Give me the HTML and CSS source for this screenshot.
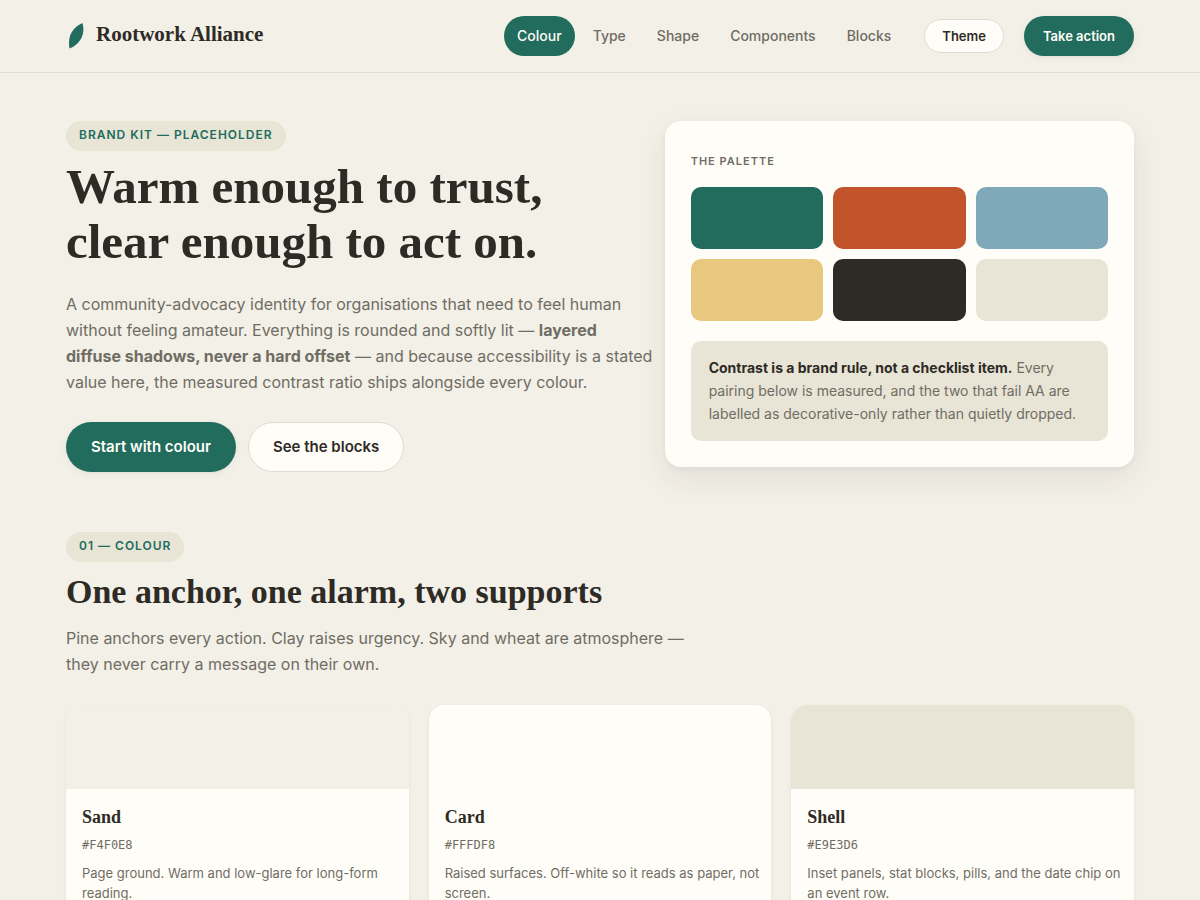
FILE: index.html
```
<!DOCTYPE html>
<html lang="en">
<head>
    <meta charset="UTF-8">
    <meta name="viewport" content="width=device-width, initial-scale=1.0">
    <title>Rootwork Alliance - Brand Kit</title>
    <link rel="stylesheet" href="styles.css">
</head>
<body>
    <header class="header">
        <a href="#top" class="logo">
            <svg class="logo-mark" width="20" height="28" viewBox="0 0 20 28" aria-hidden="true">
                <path d="M16.500 1C7.500 5 1 13 3.500 26.500C12.500 23 20 14 16.500 1Z" fill="#216c5c"/>
            </svg>
            <span>Rootwork Alliance</span>
        </a>
        <nav class="nav-links">
            <a href="#colour" class="active">Colour</a>
            <a href="#type">Type</a>
            <a href="#shape">Shape</a>
            <a href="#components">Components</a>
            <a href="#blocks">Blocks</a>
        </nav>
        <button type="button" class="btn btn-light btn-theme">Theme</button>
        <a href="#action" class="btn btn-primary btn-small">Take action</a>
    </header>

    <main class="main-content" id="top">
        <section class="hero">
            <div class="hero-text">
                <span class="pill">Brand kit — placeholder</span>
                <h1>Warm enough to trust,<br>clear enough to act on.</h1>
                <p class="lead">A community-advocacy identity for organisations that need to feel human without feeling amateur. Everything is rounded and softly lit — <strong>layered diffuse shadows, never a hard offset</strong> — and because accessibility is a stated value here, the measured contrast ratio ships alongside every colour.</p>
                <div class="hero-actions">
                    <a href="#colour" class="btn btn-primary">Start with colour</a>
                    <a href="#blocks" class="btn btn-light">See the blocks</a>
                </div>
            </div>

            <aside class="palette">
                <h2 class="palette-title">The palette</h2>
                <div class="palette-grid">
                    <span class="swatch pine"></span>
                    <span class="swatch clay"></span>
                    <span class="swatch sky"></span>
                    <span class="swatch wheat"></span>
                    <span class="swatch ink"></span>
                    <span class="swatch shell"></span>
                </div>
                <p class="note"><strong>Contrast is a brand rule, not a checklist item.</strong> Every pairing below is measured, and the two that fail AA are labelled as decorative-only rather than quietly dropped.</p>
            </aside>
        </section>

        <section class="section" id="colour">
            <span class="pill">01 — Colour</span>
            <h2>One anchor, one alarm, two supports</h2>
            <p class="section-intro">Pine anchors every action. Clay raises urgency. Sky and wheat are atmosphere — they never carry a message on their own.</p>

            <div class="colour-grid">
                <article class="colour-card">
                    <div class="chip sand"></div>
                    <div class="colour-info">
                        <h3>Sand</h3>
                        <code>#F4F0E8</code>
                        <p>Page ground. Warm and low-glare for long-form reading.</p>
                    </div>
                </article>
                <article class="colour-card">
                    <div class="chip card"></div>
                    <div class="colour-info">
                        <h3>Card</h3>
                        <code>#FFFDF8</code>
                        <p>Raised surfaces. Off-white so it reads as paper, not screen.</p>
                    </div>
                </article>
                <article class="colour-card">
                    <div class="chip shell"></div>
                    <div class="colour-info">
                        <h3>Shell</h3>
                        <code>#E9E3D6</code>
                        <p>Inset panels, stat blocks, pills, and the date chip on an event row.</p>
                    </div>
                </article>
            </div>
        </section>
    </main>
</body>
</html>
```
FILE: styles.css
```
* {
    margin: 0;
    padding: 0;
    box-sizing: border-box;
}

body {
    font-family: Inter, 'Liberation Sans', sans-serif;
    font-size: 16px;
    line-height: 26px;
    color: #6f6d63;
    background: #f3f0e8;
}

a {
    text-decoration: none;
    color: inherit;
}

h1,
h2,
h3,
.logo {
    font-family: 'Liberation Serif', serif;
    font-weight: bold;
    color: #2e2a25;
}

strong {
    font-weight: 700;
}

.header {
    display: flex;
    align-items: center;
    gap: 20px;
    padding: 16px 5.5vw;
    border-bottom: 1px solid #dedbd2;
}

.logo {
    display: flex;
    align-items: center;
    gap: 10px;
    margin-right: auto;
    font-size: 21px;
    line-height: 28px;
}

.logo span {
    padding-bottom: 4px;
}

.nav-links {
    display: flex;
    gap: 5px;
    font-size: 14px;
    font-weight: 500;
}

.nav-links a {
    padding: 7px 13px;
    border-radius: 20px;
}

.nav-links .active {
    background: #216c5c;
    color: #fffdf8;
}

.btn {
    display: inline-block;
    padding: 12px 24px;
    border: 1px solid transparent;
    border-radius: 25px;
    font-family: inherit;
    font-size: 15px;
    font-weight: 600;
    line-height: 24px;
    cursor: pointer;
}

.btn-primary {
    background: #216c5c;
    color: #fffdf8;
    box-shadow: 0 1px 2px rgba(46, 42, 37, 0.04), 0 2px 8px rgba(46, 42, 37, 0.05);
}

.btn-light {
    background: #fffdf8;
    border-color: #dedbd2;
    color: #2e2a25;
}

.btn-small {
    padding: 7px 18px;
    font-size: 13px;
}

.btn-theme {
    padding: 4px 17px;
    font-size: 13px;
}

.main-content {
    padding: 48px 5.5vw;
}

.hero {
    display: grid;
    grid-template-columns: 1.25fr 1fr;
    gap: 12px;
    align-items: start;
}

.pill {
    display: inline-block;
    padding: 4px 13px 6px;
    border-radius: 15px;
    background: #e8e4d6;
    color: #216c5c;
    font-size: 12px;
    font-weight: 600;
    line-height: 20px;
    letter-spacing: 1px;
    text-transform: uppercase;
    vertical-align: top;
}

.hero h1 {
    margin-top: 8px;
    font-size: 49px;
    line-height: 55px;
}

.lead {
    margin-top: 22px;
}

.hero-actions {
    display: flex;
    gap: 12px;
    margin-top: 27px;
}

.palette {
    padding: 26px;
    border-radius: 16px;
    background: #fffdf8;
    box-shadow: 0 2px 6px rgba(46, 42, 37, 0.05), 0 12px 32px rgba(46, 42, 37, 0.08);
}

.palette-title {
    margin-bottom: 12px;
    font-family: inherit;
    font-size: 11px;
    font-weight: 600;
    line-height: 28px;
    letter-spacing: 1px;
    text-transform: uppercase;
    color: #6f6d63;
}

.palette-grid {
    display: grid;
    grid-template-columns: repeat(3, 1fr);
    gap: 10px;
}

.swatch {
    height: 62px;
    border-radius: 10px;
}

.pine {
    background: #216c5c;
}

.clay {
    background: #c2542c;
}

.sky {
    background: #7fa8b8;
}

.wheat {
    background: #e8c87f;
}

.ink {
    background: #2e2a25;
}

.shell {
    background: #e8e4d6;
}

.sand {
    background: #f3f0e8;
}

.card {
    background: #fffdf8;
}

.note {
    margin-top: 20px;
    padding: 15px 18px 16px;
    border-radius: 10px;
    background: #e8e4d6;
    font-size: 14px;
    line-height: 23px;
}

.note strong {
    color: #2e2a25;
}

.section {
    margin-top: 60px;
}

.section h2 {
    margin-top: 8px;
    font-size: 34px;
    line-height: 44px;
}

.section-intro {
    max-width: 620px;
    margin-top: 11px;
}

.colour-grid {
    display: grid;
    grid-template-columns: repeat(3, 1fr);
    gap: 20px;
    margin-top: 28px;
}

.colour-card {
    overflow: hidden;
    border-radius: 16px;
    background: #fffdf8;
    box-shadow: 0 1px 2px rgba(46, 42, 37, 0.05), 0 2px 6px rgba(46, 42, 37, 0.04);
}

.chip {
    height: 84px;
}

.colour-info {
    padding: 16px 8px 16px 16px;
}

.colour-info h3 {
    font-size: 18px;
    line-height: 24px;
}

.colour-info code {
    display: block;
    margin-top: 6px;
    font-family: 'DejaVu Sans Mono', monospace;
    font-size: 12px;
    line-height: 20px;
}

.colour-info p {
    margin-top: 8px;
    font-size: 13px;
    line-height: 20px;
}

@media (max-width: 900px) {
    .header {
        flex-wrap: wrap;
    }

    .hero,
    .colour-grid {
        grid-template-columns: 1fr;
    }
}
```
